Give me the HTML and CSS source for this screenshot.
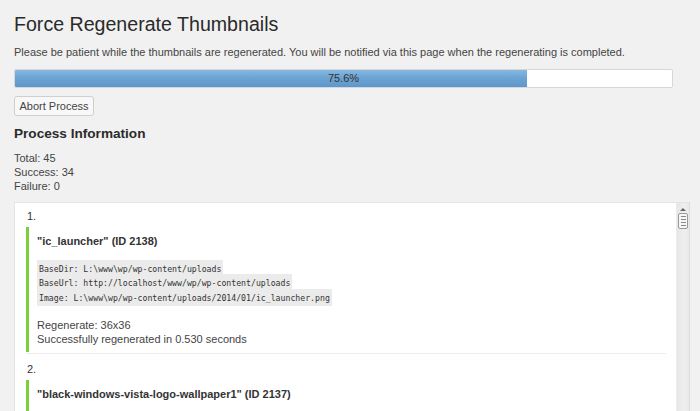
FILE: index.html
```html
<!DOCTYPE html>
<html>
<head>
<meta charset="utf-8">
<link rel="stylesheet" href="styles.css">
</head>
<body>
<div class="wrap">
  <h1 class="title">Force Regenerate Thumbnails</h1>
  <p class="desc">Please be patient while the thumbnails are regenerated. You will be notified via this page when the regenerating is completed.</p>
  <div class="progress">
    <div class="progress-fill" style="width:78%"></div>
    <div class="progress-label">75.6%</div>
  </div>
  <button class="btn">Abort Process</button>
  <h3 class="section">Process Information</h3>
  <div class="stats">
    <div>Total: 45</div>
    <div>Success: 34</div>
    <div>Failure: 0</div>
  </div>
  <div class="log">
    <div class="log-content">
      <div class="num">1.</div>
      <div class="item">
        <div class="item-inner">
          <div class="item-title">"ic_launcher" (ID 2138)</div>
          <div class="code">
            <div><code>BaseDir: L:\www\wp/wp-content/uploads</code></div>
            <div><code>BaseUrl: http://localhost/www/wp/wp-content/uploads</code></div>
            <div><code>Image: L:\www\wp/wp-content/uploads/2014/01/ic_launcher.png</code></div>
          </div>
          <div class="result">
            <div>Regenerate: 36x36</div>
            <div>Successfully regenerated in 0.530 seconds</div>
          </div>
        </div>
      </div>
      <div class="num">2.</div>
      <div class="item">
        <div class="item-inner item-open">
          <div class="item-title">"black-windows-vista-logo-wallpaper1" (ID 2137)</div>
        </div>
      </div>
    </div>
    <div class="scrollbar">
      <div class="arrow"></div>
      <div class="thumb"><span></span><span></span><span></span><span></span></div>
    </div>
  </div>
</div>
</body>
</html>
```
FILE: styles.css
```css
html, body {
  margin: 0;
  padding: 0;
  background: #f1f1f1;
  height: 100%;
  overflow: hidden;
}
body {
  font-family: "Liberation Sans", Arial, sans-serif;
  color: #444;
}
.wrap {
  padding: 12px 0 0 14px;
  width: 676px;
}
.title {
  margin: 0;
  font-size: 19.6px;
  line-height: 24px;
  font-weight: normal;
  color: #2a2a2a;
}
.desc {
  margin: 9px 0 0;
  font-size: 11px;
  line-height: 14px;
  color: #444;
}
.progress {
  margin-top: 10px;
  width: 657px;
  height: 17px;
  border: 1px solid #d2d8de;
  border-radius: 2px;
  background: #fff;
  position: relative;
  overflow: hidden;
}
.progress-fill {
  height: 100%;
  background: linear-gradient(to bottom, #86b8e0 0%, #6ca4d3 45%, #5e98ca 100%);
}
.progress-label {
  position: absolute;
  left: 0;
  right: 0;
  top: 0;
  line-height: 17px;
  text-align: center;
  font-size: 11px;
  color: #333;
}
.btn {
  display: block;
  margin-top: 8px;
  height: 20px;
  width: 80px;
  padding: 0;
  border: 1px solid #cfcfcf;
  border-radius: 3px;
  background: #f8f8f8;
  font-family: "Liberation Sans", Arial, sans-serif;
  font-size: 11px;
  color: #444;
}
.section {
  margin: 9px 0 0;
  font-size: 13.6px;
  line-height: 18px;
  font-weight: bold;
  color: #2a2a2a;
}
.stats {
  margin-top: 8px;
  font-size: 11px;
  line-height: 14px;
  color: #444;
}
.log {
  margin-top: 9px;
  display: flex;
  border: 1px solid #e4e4e4;
  border-right-color: #dcdcdc;
  background: #fff;
  height: 240px;
}
.log-content {
  flex: 1;
  padding: 6px 10px 0 11px;
  overflow: hidden;
}
.num {
  font-size: 11px;
  line-height: 14px;
  color: #333;
  padding-left: 1px;
}
.item {
  margin-top: 4px;
  padding-bottom: 1px;
  border-bottom: 1px solid #ececec;
}
.item-inner {
  border-left: 3px solid #7ad03a;
  padding: 7px 0 6px 8px;
}
.item-open {
  padding-bottom: 40px;
}
.item-title {
  font-size: 11px;
  line-height: 14px;
  font-weight: bold;
  color: #333;
}
.code {
  margin-top: 13px;
  font-family: "DejaVu Sans Mono", "Liberation Mono", monospace;
  font-size: 8.2px;
  line-height: 14.5px;
}
.code code {
  font-family: inherit;
  background: #ebebeb;
  padding: 3.5px 2px;
  color: #333;
}
.result {
  margin-top: 13px;
  font-size: 11px;
  line-height: 14px;
  color: #444;
}
.item + .num {
  margin-top: 8px;
}
.scrollbar {
  width: 12px;
  background: linear-gradient(to right, #e6e6e6, #efefef 60%, #e9e9e9);
  border-left: 1px solid #ececec;
  display: flex;
  flex-direction: column;
  align-items: center;
}
.arrow {
  margin-top: 5px;
  width: 0;
  height: 0;
  border-left: 3px solid transparent;
  border-right: 3px solid transparent;
  border-bottom: 3px solid #666;
}
.thumb {
  margin-top: 2px;
  width: 8px;
  height: 14px;
  border: 1px solid #9a9a9a;
  border-radius: 2px;
  background: #f6f6f6;
  display: flex;
  flex-direction: column;
  align-items: center;
  justify-content: center;
  gap: 2px;
}
.thumb span {
  display: block;
  width: 5px;
  height: 1px;
  background: #888;
}
```
